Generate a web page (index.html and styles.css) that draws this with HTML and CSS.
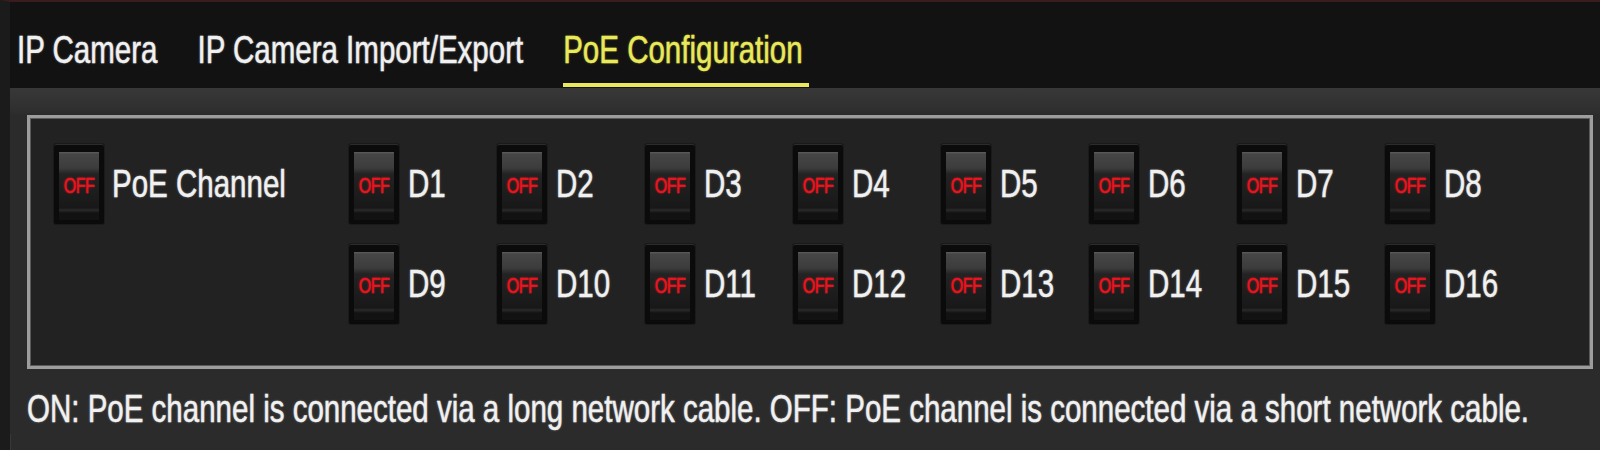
FILE: index.html
```html
<!DOCTYPE html>
<html lang="en">
<head>
  <meta charset="UTF-8" />
  <meta name="viewport" content="width=device-width, initial-scale=1.0"/>
  <title>PoE Configuration</title>
  <link rel="stylesheet" href="styles.css">
</head>
<body>
  <div class="screen">
    <nav class="tabs">
      <a href="#" class="tab"><span class="txt">IP Camera</span></a>
      <a href="#" class="tab"><span class="txt">IP Camera Import/Export</span></a>
      <a href="#" class="tab active"><span class="txt">PoE Configuration</span></a>
    </nav>

    <div class="content">
      <div class="poe-box">
        <div class="channel channel-all">
          <button class="switch"><span class="switch-face"><span class="switch-text">OFF</span></span></button>
          <span class="txt">PoE Channel</span>
        </div>
        <div class="channel"><button class="switch"><span class="switch-face"><span class="switch-text">OFF</span></span></button><span class="txt">D1</span></div>
        <div class="channel"><button class="switch"><span class="switch-face"><span class="switch-text">OFF</span></span></button><span class="txt">D2</span></div>
        <div class="channel"><button class="switch"><span class="switch-face"><span class="switch-text">OFF</span></span></button><span class="txt">D3</span></div>
        <div class="channel"><button class="switch"><span class="switch-face"><span class="switch-text">OFF</span></span></button><span class="txt">D4</span></div>
        <div class="channel"><button class="switch"><span class="switch-face"><span class="switch-text">OFF</span></span></button><span class="txt">D5</span></div>
        <div class="channel"><button class="switch"><span class="switch-face"><span class="switch-text">OFF</span></span></button><span class="txt">D6</span></div>
        <div class="channel"><button class="switch"><span class="switch-face"><span class="switch-text">OFF</span></span></button><span class="txt">D7</span></div>
        <div class="channel"><button class="switch"><span class="switch-face"><span class="switch-text">OFF</span></span></button><span class="txt">D8</span></div>
        <div class="channel row-start"><button class="switch"><span class="switch-face"><span class="switch-text">OFF</span></span></button><span class="txt">D9</span></div>
        <div class="channel"><button class="switch"><span class="switch-face"><span class="switch-text">OFF</span></span></button><span class="txt">D10</span></div>
        <div class="channel"><button class="switch"><span class="switch-face"><span class="switch-text">OFF</span></span></button><span class="txt">D11</span></div>
        <div class="channel"><button class="switch"><span class="switch-face"><span class="switch-text">OFF</span></span></button><span class="txt">D12</span></div>
        <div class="channel"><button class="switch"><span class="switch-face"><span class="switch-text">OFF</span></span></button><span class="txt">D13</span></div>
        <div class="channel"><button class="switch"><span class="switch-face"><span class="switch-text">OFF</span></span></button><span class="txt">D14</span></div>
        <div class="channel"><button class="switch"><span class="switch-face"><span class="switch-text">OFF</span></span></button><span class="txt">D15</span></div>
        <div class="channel"><button class="switch"><span class="switch-face"><span class="switch-text">OFF</span></span></button><span class="txt">D16</span></div>
      </div>

      <p class="note"><span class="txt">ON: PoE channel is connected via a long network cable. OFF: PoE channel is connected via a short network cable.</span></p>
    </div>
  </div>
</body>
</html>
```

FILE: styles.css
```css
:root {
  --bar: #121212;
  --panel: #2b2b2b;
  --box: #222222;
  --text: #f1f1f1;
  --yellow: #e9e95a;
  --red: #ec1420;
}

body {
  margin: 0;
  background: var(--panel);
  font-family: 'Liberation Sans', Arial, sans-serif;
  color: var(--text);
  overflow: hidden;
}

.screen {
  height: 450px;
  box-sizing: border-box;
  border-top: 2px solid #3b1c1c;
  border-left: 10px solid #1b1b1b;
  box-shadow: inset 1px 0 0 #383838;
  background: var(--panel);
}

/* the DVR screen is stretched tall, so the text is too */
.txt {
  display: inline-block;
  font-size: 29.5px;
  line-height: 40px;
  transform: scaleY(1.33);
  -webkit-text-stroke: 0.35px currentColor;
  text-shadow: 0 0 2px rgba(255, 255, 255, 0.4);
}

/* tab strip */
.tabs {
  display: flex;
  gap: 40px;
  height: 86px;
  box-sizing: border-box;
  padding: 27.5px 0 0 7px;
  background: var(--bar);
}

.tab {
  display: block;
  color: var(--text);
  text-decoration: none;
  height: 40px;
  padding-bottom: 13.5px;
  border-bottom: 4px solid transparent;
}

.tab.active {
  color: var(--yellow);
  border-bottom-color: var(--yellow);
  padding-right: 6px;
}

.tab.active .txt {
  text-shadow: 0 0 2px rgba(240, 240, 90, 0.4);
}

.content {
  padding: 27px 7px 0 17px;
  background: linear-gradient(to bottom, #383838 0, #2e2e2e 24px, var(--panel) 27px);
}

/* switch grid */
.poe-box {
  display: grid;
  grid-template-columns: 295px repeat(8, 148px);
  grid-auto-rows: 82px;
  row-gap: 18px;
  padding: 25px 0 41px 23px;
  background: var(--box);
  border: 3px solid #9d9d9d;
  box-shadow: inset 0 0 0 1px #5a5a5a;
}

.channel {
  display: flex;
  align-items: center;
  gap: 8px;
}

.channel-all {
  gap: 7px;
}

.row-start {
  grid-column-start: 2;
}

.switch {
  width: 52px;
  height: 82px;
  padding: 8px 5px 4px;
  border: 1px solid #1a1a1a;
  border-radius: 3px;
  background: #0b0b0b;
  box-shadow: inset 0 1px 0 #2c2c2c;
  cursor: pointer;
}

.switch-face {
  display: flex;
  align-items: center;
  justify-content: center;
  height: 100%;
  background: linear-gradient(to bottom,
    #5e5e5e 0, #464646 2px, #3c3c3c 16px, #232323 22px,
    #181818 56px, #2a2a2a 58px, #121212 61px);
}

.switch-text {
  display: inline-block;
  color: var(--red);
  font-family: 'Liberation Sans', Arial, sans-serif;
  font-size: 16px;
  letter-spacing: -0.5px;
  transform: scaleY(1.4);
  -webkit-text-stroke: 0.4px currentColor;
  text-shadow: 0 0 2px rgba(255, 30, 30, 0.6);
}

.note {
  margin: 20px 0 0;
  line-height: 40px;
  white-space: nowrap;
}
```
